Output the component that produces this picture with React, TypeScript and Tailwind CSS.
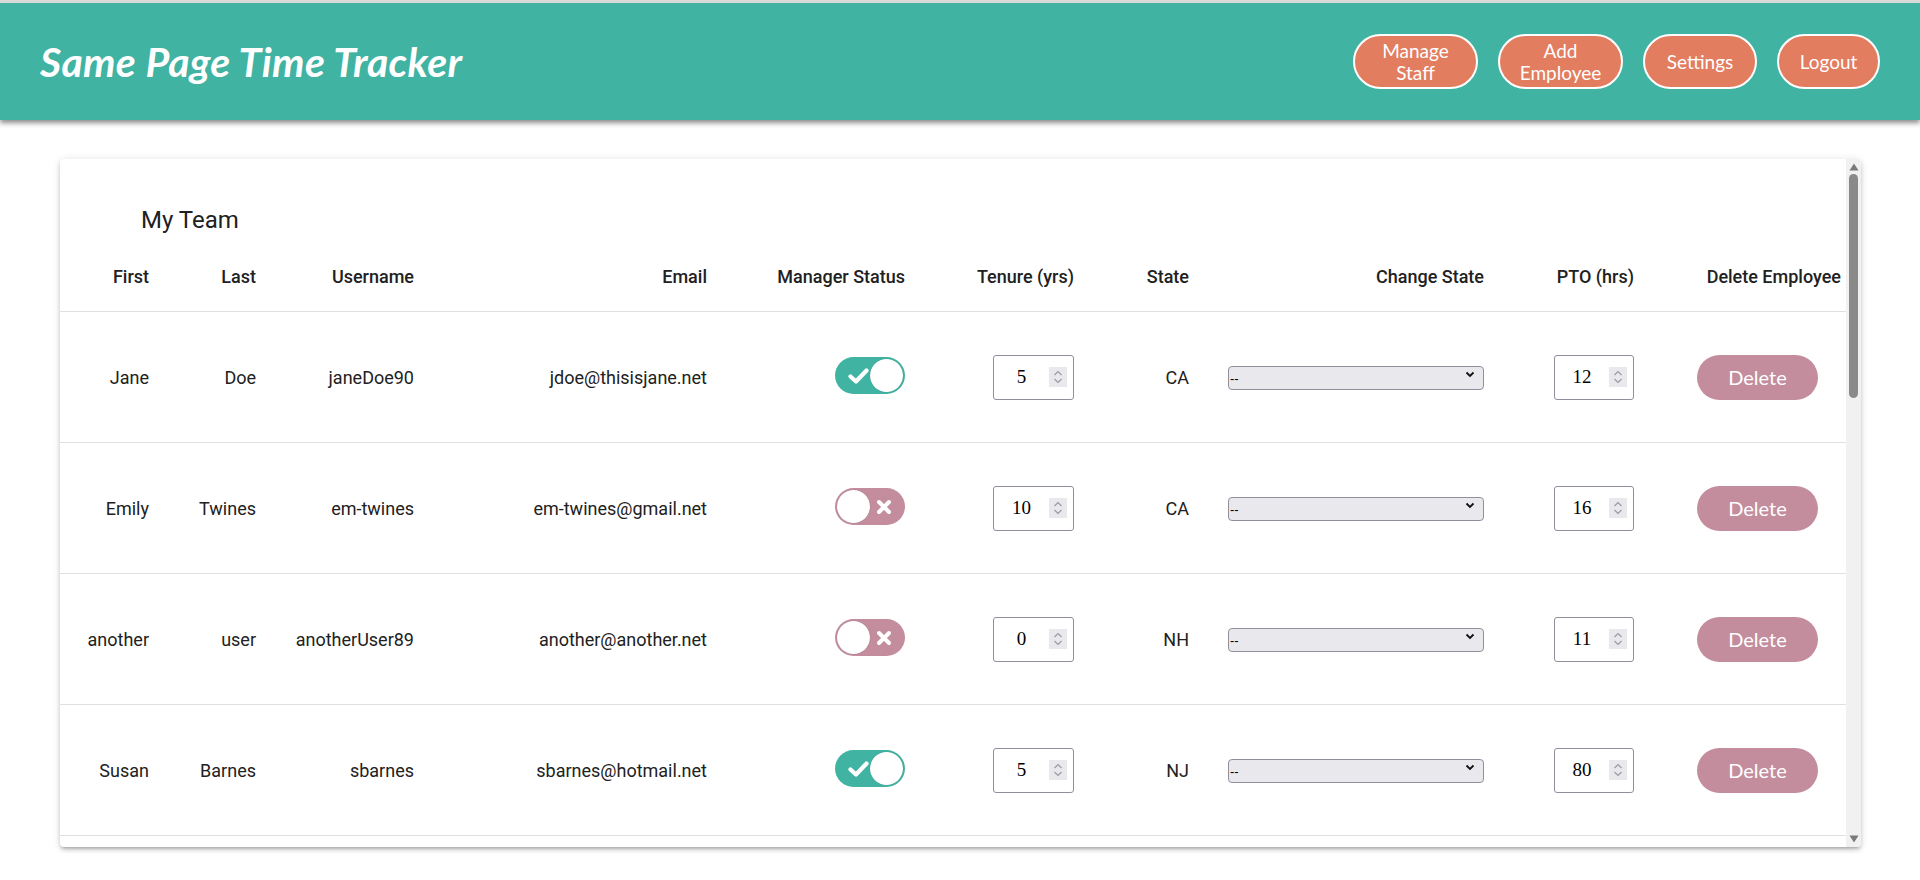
import { useState } from "react";

type Employee = {
  first: string;
  last: string;
  username: string;
  email: string;
  manager: boolean;
  tenure: number;
  state: string;
  pto: number;
};

const employees: Employee[] = [
  { first: "Jane", last: "Doe", username: "janeDoe90", email: "jdoe@thisisjane.net", manager: true, tenure: 5, state: "CA", pto: 12 },
  { first: "Emily", last: "Twines", username: "em-twines", email: "em-twines@gmail.net", manager: false, tenure: 10, state: "CA", pto: 16 },
  { first: "another", last: "user", username: "anotherUser89", email: "another@another.net", manager: false, tenure: 0, state: "NH", pto: 11 },
  { first: "Susan", last: "Barnes", username: "sbarnes", email: "sbarnes@hotmail.net", manager: true, tenure: 5, state: "NJ", pto: 80 },
];

const cols =
  "grid grid-cols-[89px_107px_158px_293px_198px_169px_115px_295px_150px_1fr]";

function Toggle({ on }: { on: boolean }) {
  const [checked, setChecked] = useState(on);
  return (
    <button
      onClick={() => setChecked(!checked)}
      className={`relative flex h-[37px] w-[70px] items-center rounded-full px-[2px] mb-[3px] ${
        checked ? "bg-[#41b3a3] justify-end" : "bg-[#c38d9e] justify-start"
      }`}
    >
      {checked ? (
        <svg className="absolute left-[13px] top-[11px]" width="21" height="16" viewBox="0 0 21 16">
          <path d="M2.5 8.5 L8 13.5 L18.5 2.5" fill="none" stroke="white" strokeWidth="4.2" strokeLinecap="round" strokeLinejoin="round" />
        </svg>
      ) : (
        <svg className="absolute right-[13px] top-[11px]" width="16" height="16" viewBox="0 0 16 16">
          <path d="M3 3 L13 13 M13 3 L3 13" fill="none" stroke="white" strokeWidth="4" strokeLinecap="round" />
        </svg>
      )}
      <span className="h-[33px] w-[33px] rounded-full bg-white shadow-[0_0_1px_rgba(0,0,0,0.3)]" />
    </button>
  );
}

function NumberBox({ value, width }: { value: number; width: string }) {
  return (
    <div className={`flex h-[45px] ${width} items-center rounded-[3px] border border-[#8f8f9d] bg-white pr-[6px]`}>
      <span className="flex-1 text-center font-['Liberation_Serif',serif] text-[19px] text-black">{value}</span>
      <span className="flex h-[20px] w-[18px] flex-col items-center justify-center gap-[2px] bg-[#e9e9ed]">
        <svg width="10" height="6" viewBox="0 0 10 6">
          <path d="M1.5 5 L5 1.5 L8.5 5" fill="none" stroke="#9a9aa6" strokeWidth="1.2" />
        </svg>
        <svg width="10" height="6" viewBox="0 0 10 6">
          <path d="M1.5 1 L5 4.5 L8.5 1" fill="none" stroke="#9a9aa6" strokeWidth="1.2" />
        </svg>
      </span>
    </div>
  );
}

function StateSelect() {
  return (
    <div className="relative mb-[5px] h-[24px] w-[256px]">
      <select className="h-full w-full appearance-none rounded-[4px] border border-[#8f8f9d] bg-[#e9e9ed] pl-[1px] font-['Liberation_Sans',sans-serif] text-[13px] text-black outline-none">
        <option>--</option>
        <option>CA</option>
        <option>NH</option>
        <option>NJ</option>
      </select>
      <svg className="pointer-events-none absolute right-[9px] top-[8px]" width="10" height="7" viewBox="0 0 10 7">
        <path d="M1.5 1.5 L5 5 L8.5 1.5" fill="none" stroke="#111" strokeWidth="1.8" />
      </svg>
    </div>
  );
}

function HeaderButton({ lines, width }: { lines: string[]; width: string }) {
  return (
    <button
      className={`flex h-[55px] ${width} flex-col items-center justify-center rounded-full border-2 border-white bg-[#e27d60] font-['Lato',sans-serif] text-[19px] leading-[22px] text-white`}
    >
      {lines.map((l) => (
        <span key={l}>{l}</span>
      ))}
    </button>
  );
}

export default function App() {
  const heads = [
    "First",
    "Last",
    "Username",
    "Email",
    "Manager Status",
    "Tenure (yrs)",
    "State",
    "Change State",
    "PTO (hrs)",
    "Delete Employee",
  ];

  return (
    <div className="min-h-screen bg-white font-['Roboto',sans-serif]">
      <header className="flex h-[120px] items-center justify-between border-t-[3px] border-[#dadada] bg-[#41b3a3] px-[40px] shadow-[0_3px_5px_rgba(0,0,0,0.45)]">
        <h1 className="font-['Lato',sans-serif] text-[41px] font-bold italic tracking-[0.3px] text-white">
          Same Page Time Tracker
        </h1>
        <nav className="flex gap-[20px]">
          <HeaderButton lines={["Manage", "Staff"]} width="w-[125px]" />
          <HeaderButton lines={["Add", "Employee"]} width="w-[125px]" />
          <HeaderButton lines={["Settings"]} width="w-[114px]" />
          <HeaderButton lines={["Logout"]} width="w-[103px]" />
        </nav>
      </header>

      <main className="px-[60px] pt-[39px] pr-[59px]">
        <div className="flex h-[688px] overflow-hidden rounded-[4px] bg-white shadow-[0_3px_3px_-2px_rgba(0,0,0,0.2),0_3px_4px_0_rgba(0,0,0,0.14),0_1px_8px_0_rgba(0,0,0,0.12)]">
          <div className="min-w-0 flex-1">
            <div className="h-[83px] pl-[81px] pt-[45px]">
              <h2 className="text-[24px] leading-[32px] text-[#212121]">My Team</h2>
            </div>
            <div className={`${cols} h-[70px] items-center border-b border-[#e0e0e0] text-[18px] font-medium text-[#212121]`}>
              {heads.map((h, i) => (
                <div key={h} className={`text-right ${i === 9 ? "pr-[5px]" : ""}`}>
                  {h}
                </div>
              ))}
            </div>
            {employees.map((e) => (
              <div
                key={e.username}
                className={`${cols} h-[131px] items-center border-b border-[#e0e0e0] text-[18px] text-[#212121]`}
              >
                <div className="text-right">{e.first}</div>
                <div className="text-right">{e.last}</div>
                <div className="text-right">{e.username}</div>
                <div className="text-right">{e.email}</div>
                <div className="flex justify-end">
                  <Toggle on={e.manager} />
                </div>
                <div className="flex justify-end">
                  <NumberBox value={e.tenure} width="w-[81px]" />
                </div>
                <div className="text-right">{e.state}</div>
                <div className="flex justify-end">
                  <StateSelect />
                </div>
                <div className="flex justify-end">
                  <NumberBox value={e.pto} width="w-[80px]" />
                </div>
                <div className="flex justify-end pr-[28px]">
                  <button className="h-[45px] w-[121px] rounded-full bg-[#c38d9e] font-['Lato',sans-serif] text-[20px] text-white">
                    Delete
                  </button>
                </div>
              </div>
            ))}
          </div>

          {/* scrollbar */}
          <div className="flex w-[15px] flex-col items-center bg-[#f1f1f1] pt-[4px] pb-[4px]">
            <svg width="10" height="8" viewBox="0 0 10 8">
              <path d="M5 0.5 L9.5 7.5 L0.5 7.5 Z" fill="#7a7a7a" />
            </svg>
            <div className="mt-[3px] h-[224px] w-[9px] rounded-full bg-[#8a8a8a]" />
            <div className="flex-1" />
            <svg width="10" height="8" viewBox="0 0 10 8">
              <path d="M0.5 0.5 L9.5 0.5 L5 7.5 Z" fill="#7a7a7a" />
            </svg>
          </div>
        </div>
      </main>
    </div>
  );
}
